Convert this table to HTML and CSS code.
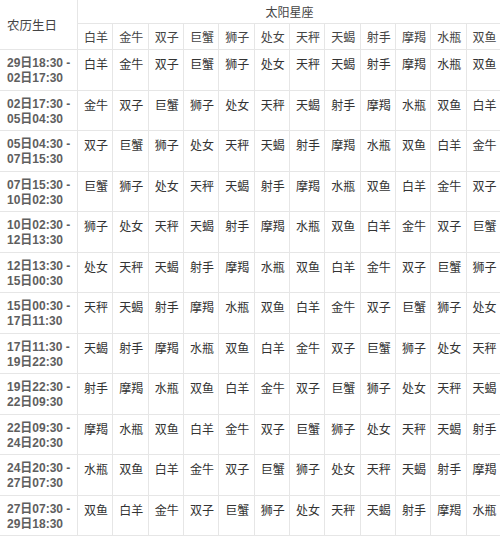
FILE: index.html
```html
<!DOCTYPE html>
<html lang="zh">
<head>
<meta charset="utf-8">
<title>农历生日 太阳星座</title>
<link rel="stylesheet" href="styles.css">
</head>
<body>
<table class="zt">
<colgroup>
<col class="c-date">
<col class="c-z"><col class="c-z"><col class="c-z"><col class="c-z"><col class="c-z"><col class="c-z">
<col class="c-z"><col class="c-z"><col class="c-z"><col class="c-z"><col class="c-z"><col class="c-z">
</colgroup>
<thead>
<tr class="h1">
<th class="hd" rowspan="2">农历生日</th>
<th class="hs" colspan="12">太阳星座</th>
</tr>
<tr class="h2">
<th>白羊</th><th>金牛</th><th>双子</th><th>巨蟹</th><th>狮子</th><th>处女</th><th>天秤</th><th>天蝎</th><th>射手</th><th>摩羯</th><th>水瓶</th><th>双鱼</th>
</tr>
</thead>
<tbody>
<tr><td class="d">29日18:30 -<br>02日17:30</td><td>白羊</td><td>金牛</td><td>双子</td><td>巨蟹</td><td>狮子</td><td>处女</td><td>天秤</td><td>天蝎</td><td>射手</td><td>摩羯</td><td>水瓶</td><td>双鱼</td></tr>
<tr><td class="d">02日17:30 -<br>05日04:30</td><td>金牛</td><td>双子</td><td>巨蟹</td><td>狮子</td><td>处女</td><td>天秤</td><td>天蝎</td><td>射手</td><td>摩羯</td><td>水瓶</td><td>双鱼</td><td>白羊</td></tr>
<tr><td class="d">05日04:30 -<br>07日15:30</td><td>双子</td><td>巨蟹</td><td>狮子</td><td>处女</td><td>天秤</td><td>天蝎</td><td>射手</td><td>摩羯</td><td>水瓶</td><td>双鱼</td><td>白羊</td><td>金牛</td></tr>
<tr><td class="d">07日15:30 -<br>10日02:30</td><td>巨蟹</td><td>狮子</td><td>处女</td><td>天秤</td><td>天蝎</td><td>射手</td><td>摩羯</td><td>水瓶</td><td>双鱼</td><td>白羊</td><td>金牛</td><td>双子</td></tr>
<tr><td class="d">10日02:30 -<br>12日13:30</td><td>狮子</td><td>处女</td><td>天秤</td><td>天蝎</td><td>射手</td><td>摩羯</td><td>水瓶</td><td>双鱼</td><td>白羊</td><td>金牛</td><td>双子</td><td>巨蟹</td></tr>
<tr><td class="d">12日13:30 -<br>15日00:30</td><td>处女</td><td>天秤</td><td>天蝎</td><td>射手</td><td>摩羯</td><td>水瓶</td><td>双鱼</td><td>白羊</td><td>金牛</td><td>双子</td><td>巨蟹</td><td>狮子</td></tr>
<tr><td class="d">15日00:30 -<br>17日11:30</td><td>天秤</td><td>天蝎</td><td>射手</td><td>摩羯</td><td>水瓶</td><td>双鱼</td><td>白羊</td><td>金牛</td><td>双子</td><td>巨蟹</td><td>狮子</td><td>处女</td></tr>
<tr><td class="d">17日11:30 -<br>19日22:30</td><td>天蝎</td><td>射手</td><td>摩羯</td><td>水瓶</td><td>双鱼</td><td>白羊</td><td>金牛</td><td>双子</td><td>巨蟹</td><td>狮子</td><td>处女</td><td>天秤</td></tr>
<tr><td class="d">19日22:30 -<br>22日09:30</td><td>射手</td><td>摩羯</td><td>水瓶</td><td>双鱼</td><td>白羊</td><td>金牛</td><td>双子</td><td>巨蟹</td><td>狮子</td><td>处女</td><td>天秤</td><td>天蝎</td></tr>
<tr><td class="d">22日09:30 -<br>24日20:30</td><td>摩羯</td><td>水瓶</td><td>双鱼</td><td>白羊</td><td>金牛</td><td>双子</td><td>巨蟹</td><td>狮子</td><td>处女</td><td>天秤</td><td>天蝎</td><td>射手</td></tr>
<tr><td class="d">24日20:30 -<br>27日07:30</td><td>水瓶</td><td>双鱼</td><td>白羊</td><td>金牛</td><td>双子</td><td>巨蟹</td><td>狮子</td><td>处女</td><td>天秤</td><td>天蝎</td><td>射手</td><td>摩羯</td></tr>
<tr><td class="d">27日07:30 -<br>29日18:30</td><td>双鱼</td><td>白羊</td><td>金牛</td><td>双子</td><td>巨蟹</td><td>狮子</td><td>处女</td><td>天秤</td><td>天蝎</td><td>射手</td><td>摩羯</td><td>水瓶</td></tr>
</tbody>
</table>
</body>
</html>
```
FILE: styles.css
```css
html, body {
  margin: 0;
  padding: 0;
  background: #fff;
  overflow: hidden;
}
body {
  width: 500px;
  height: 539px;
  font-family: "Noto Sans CJK SC", "Noto Sans", sans-serif;
  font-size: 12px;
  color: #333;
}
.zt {
  border-collapse: separate;
  border-spacing: 0;
  table-layout: fixed;
  width: 502px;
}
.c-date { width: 78px; }
.c-z { width: 35.33px; }
.zt th, .zt td {
  border-right: 1px solid #e6e6e6;
  border-bottom: 1px solid #e6e6e6;
  padding: 0 0 0 6px;
  text-align: left;
  font-weight: normal;
  line-height: 15px;
  white-space: nowrap;
  overflow: hidden;
  box-sizing: border-box;
}
.h1 th { height: 24px; }
.h2 th { height: 26px; vertical-align: middle; color: #444; }
.zt .hd {
  padding-left: 7px;
  vertical-align: middle;
  color: #444;
  font-size: 12.5px;
}
.zt .hs {
  text-align: center;
  vertical-align: middle;
  color: #444;
  padding: 0 0 1px 0;
}
.zt td {
  height: 40.5px;
  vertical-align: top;
  padding-top: 6px;
}
.zt td.d {
  padding-left: 7px;
  font-weight: bold;
  color: #5e5e5e;
  font-family: "Liberation Sans", "Noto Sans CJK SC", sans-serif;
  font-size: 12px;
  line-height: 15px;
}
```
